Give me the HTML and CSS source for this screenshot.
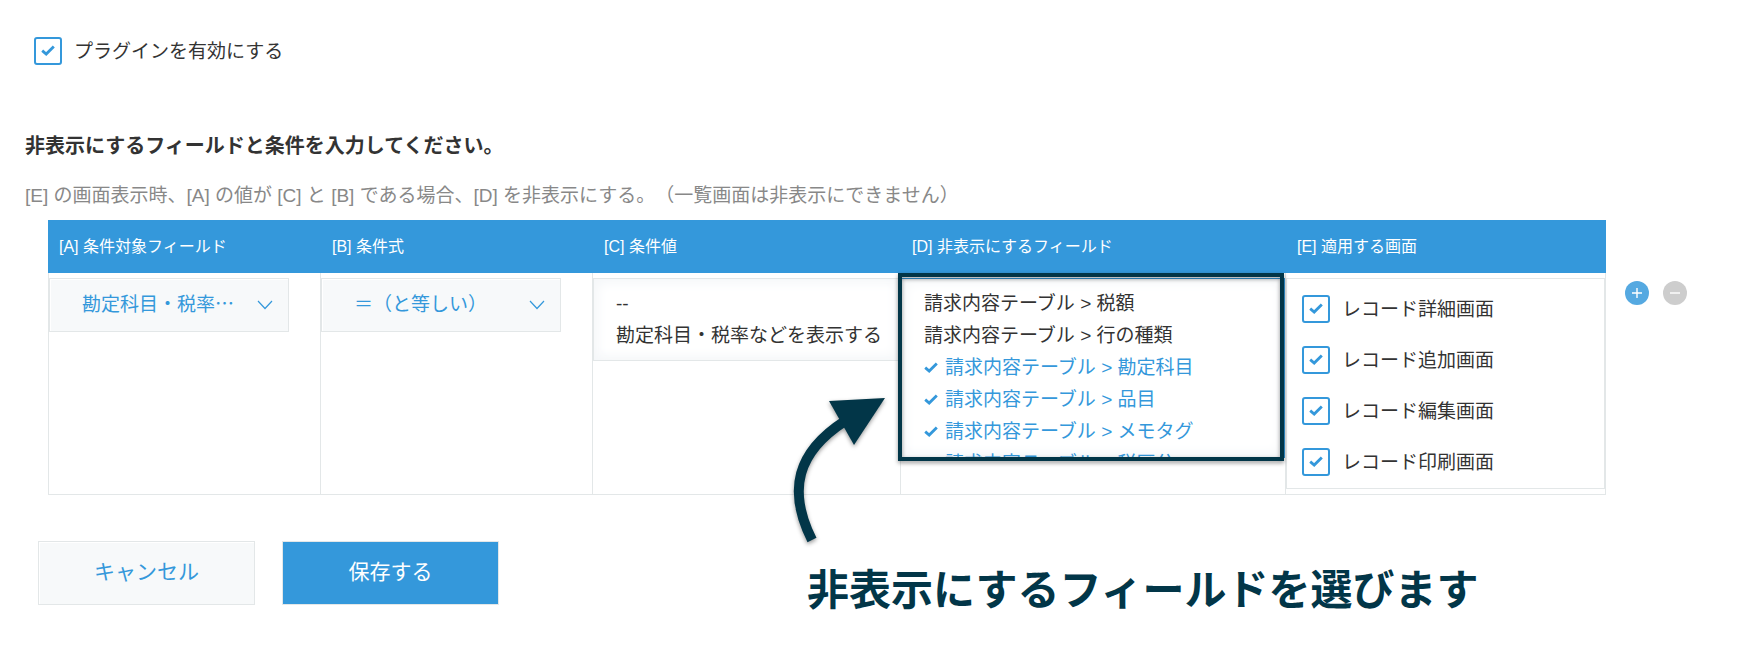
FILE: index.html
```html
<!DOCTYPE html>
<html lang="ja">
<head>
	<meta charset="utf-8">
	<meta name="viewport" content="width=device-width, initial-scale=1">
	<title>プラグインの設定</title>
	<link rel="stylesheet" href="styles.css">
</head>
<body>
<svg class="symbols" width="0" height="0" aria-hidden="true">
	<symbol id="tick" viewBox="0 0 14 11">
		<path d="M1.2 5.6 L5.2 9 L12.8 1.4" fill="none" stroke="#3498db" stroke-width="2.8"/>
	</symbol>
</svg>
<form class="settings">
	<label class="check">
		<input type="checkbox" checked>
		<svg class="tick"><use href="#tick"/></svg>
		<span>プラグインを有効にする</span>
	</label>

	<h1>非表示にするフィールドと条件を入力してください。</h1>
	<p class="hint">[E] の画面表示時、[A] の値が [C] と [B] である場合、[D] を非表示にする。（一覧画面は非表示にできません）</p>

	<div class="table_row">
		<table>
			<colgroup>
				<col class="col_field">
				<col class="col_operator">
				<col class="col_value">
				<col class="col_hidden">
				<col>
			</colgroup>
			<thead>
				<tr>
					<th>[A] 条件対象フィールド</th>
					<th>[B] 条件式</th>
					<th>[C] 条件値</th>
					<th>[D] 非表示にするフィールド</th>
					<th>[E] 適用する画面</th>
				</tr>
			</thead>
			<tbody>
				<tr>
					<td>
						<div class="dropdown">
							<select aria-label="条件対象フィールド">
								<option>勘定科目・税率…</option>
							</select>
							<svg class="chevron" viewBox="0 0 16 10"><path d="M1 1 L8 8.5 L15 1" fill="none" stroke="#3498db" stroke-width="1.2"/></svg>
						</div>
					</td>
					<td>
						<div class="dropdown">
							<select aria-label="条件式">
								<option>＝（と等しい）</option>
							</select>
							<svg class="chevron" viewBox="0 0 16 10"><path d="M1 1 L8 8.5 L15 1" fill="none" stroke="#3498db" stroke-width="1.2"/></svg>
						</div>
					</td>
					<td>
						<ul class="list" role="listbox" aria-label="条件値">
							<li role="option">--</li>
							<li role="option">勘定科目・税率などを表示する</li>
						</ul>
					</td>
					<td class="hidden_fields">
						<ul class="list list_focus" role="listbox" aria-label="非表示にするフィールド" aria-multiselectable="true">
							<li role="option">請求内容テーブル &gt; 税額</li>
							<li role="option">請求内容テーブル &gt; 行の種類</li>
							<li role="option" aria-selected="true"><svg><use href="#tick"/></svg>請求内容テーブル &gt; 勘定科目</li>
							<li role="option" aria-selected="true"><svg><use href="#tick"/></svg>請求内容テーブル &gt; 品目</li>
							<li role="option" aria-selected="true"><svg><use href="#tick"/></svg>請求内容テーブル &gt; メモタグ</li>
							<li role="option" aria-selected="true"><svg><use href="#tick"/></svg>請求内容テーブル &gt; 税区分</li>
						</ul>
						<!-- guide drawn over the table -->
						<div class="guide_frame"></div>
						<svg class="guide_arrow" viewBox="0 0 110 160">
							<path d="M31 147 C6 97 16 59 64 28" fill="none" stroke="#023648" stroke-width="10"/>
							<path d="M48 8 L104 5 L73 52 Z" fill="#023648"/>
						</svg>
						<p class="guide_text">非表示にするフィールドを選びます</p>
					</td>
					<td>
						<div class="screens">
							<label class="check">
								<input type="checkbox" checked>
								<svg class="tick"><use href="#tick"/></svg>
								<span>レコード詳細画面</span>
							</label>
							<label class="check">
								<input type="checkbox" checked>
								<svg class="tick"><use href="#tick"/></svg>
								<span>レコード追加画面</span>
							</label>
							<label class="check">
								<input type="checkbox" checked>
								<svg class="tick"><use href="#tick"/></svg>
								<span>レコード編集画面</span>
							</label>
							<label class="check">
								<input type="checkbox" checked>
								<svg class="tick"><use href="#tick"/></svg>
								<span>レコード印刷画面</span>
							</label>
						</div>
					</td>
				</tr>
			</tbody>
		</table>
		<div class="row_tools">
			<button type="button" class="round add" aria-label="行を追加">
				<svg viewBox="0 0 24 24"><path d="M7 12 H17 M12 7 V17" stroke="#fff" stroke-width="1.4"/></svg>
			</button>
			<button type="button" class="round remove" aria-label="行を削除">
				<svg viewBox="0 0 24 24"><path d="M7 12 H17" stroke="#fff" stroke-width="1.4"/></svg>
			</button>
		</div>
	</div>

	<div class="buttons">
		<button type="button" class="button cancel">キャンセル</button>
		<button type="submit" class="button save">保存する</button>
	</div>
</form>
</body>
</html>
```
FILE: styles.css
```css
*{
	box-sizing: border-box;
}
body{
	margin: 0;
	background-color: #fff;
	color: #333;
	font-family: "Liberation Sans", "Noto Sans CJK JP", sans-serif;
	font-size: 19px;
	line-height: 32px;
	text-spacing-trim: space-all;
}
.symbols{
	position: absolute;
}
.settings{
	padding: 37px 0 40px;
}
.settings > .check{
	margin-left: 34px;
}

/* checkboxes */
.check{
	display: flex;
	align-items: center;
	width: max-content;
	height: 28px;
	position: relative;
}
.check input{
	appearance: none;
	width: 28px;
	height: 28px;
	margin: 0 12px 0 0;
	border: 2px solid #3498db;
	border-radius: 3px;
	background-color: #fff;
}
.check span{
	padding-top: 2px;
}
.check .tick{
	position: absolute;
	left: 7px;
	top: 8px;
	width: 14px;
	height: 11px;
	display: none;
}
.check input:checked + .tick{
	display: block;
}

h1{
	margin: 65px 0 0 25px;
	font-size: 20px;
	line-height: 32px;
}
.hint{
	margin: 18px 0 8px 25px;
	color: #888;
}

/* condition table */
.table_row{
	display: flex;
	align-items: flex-start;
	padding: 0 67px 0 48px;
}
table{
	flex: 1;
	width: 100%;
	table-layout: fixed;
	border-collapse: separate;
	border-spacing: 0;
}
.col_field{
	width: 273px;
}
.col_operator{
	width: 272px;
}
.col_value{
	width: 308px;
}
.col_hidden{
	width: 385px;
}
th{
	height: 53px;
	padding: 0 11px;
	background-color: #3498db;
	color: #fff;
	font-size: 16px;
	font-weight: normal;
	line-height: 24px;
	text-align: left;
}
td{
	padding: 5px 0;
	border: 1px solid #e3e7e8;
	border-width: 0 1px 1px 0;
	vertical-align: top;
}
td:first-child{
	border-left-width: 1px;
}

.dropdown{
	position: relative;
	width: 240px;
}
.dropdown select{
	appearance: none;
	display: block;
	width: 100%;
	height: 54px;
	padding: 0 40px 6px 32px;
	border: 1px solid #e3e7e8;
	border-radius: 0;
	background-color: #f7f9fa;
	box-shadow: 1px 1px 1px #fff inset;
	color: #3498db;
	font-family: "Noto Sans CJK JP", sans-serif;
	font-size: 19px;
}
.chevron{
	position: absolute;
	right: 16px;
	top: 22px;
	width: 16px;
	height: 10px;
}

.list{
	margin: 0;
	padding: 9px 22px 8px;
	border: 1px solid #e3e7e8;
	background-color: #fff;
	box-shadow: 4px 4px 12px #f5f7f9 inset, -4px -4px 12px #f5f7f9 inset;
	list-style: none;
	white-space: nowrap;
}
.list_focus{
	height: 180px;
	padding-bottom: 0;
	border-color: #3498db;
	overflow: hidden;
}
.list li[aria-selected="true"]{
	color: #3498db;
}
.list svg{
	width: 14px;
	height: 13px;
	margin-right: 7px;
}

.screens{
	display: flex;
	flex-direction: column;
	gap: 23px;
	padding: 16px 15px 12px;
	border: 1px solid #e3e7e8;
}

.row_tools{
	display: flex;
	gap: 14px;
	padding: 61px 0 0 19px;
}
.round{
	width: 24px;
	height: 24px;
	padding: 0;
	border: 0;
	border-radius: 50%;
}
.round svg{
	display: block;
}
.add{
	background-color: #55a9e1;
}
.remove{
	background-color: #cdcdcd;
}

/* guide */
.hidden_fields{
	position: relative;
}
.guide_frame{
	position: absolute;
	left: -3px;
	top: 0;
	width: 386px;
	height: 188px;
	border: 4px solid #023648;
	filter: drop-shadow(0 2px 2px rgba(0,0,0,0.4));
}
.guide_arrow{
	position: absolute;
	left: -120px;
	top: 120px;
	width: 110px;
	height: 160px;
	filter: drop-shadow(0 2px 2px rgba(0,0,0,0.4));
}
.guide_text{
	position: absolute;
	left: -94px;
	top: 286px;
	margin: 0;
	color: #023648;
	font-size: 42px;
	font-weight: bold;
	line-height: 64px;
	white-space: nowrap;
}

/* buttons */
.buttons{
	display: flex;
	gap: 27px;
	margin: 46px 0 0 38px;
}
.button{
	width: 217px;
	height: 64px;
	padding: 0 0 6px;
	border: 1px solid #e3e7e8;
	font-family: inherit;
	font-size: 21px;
}
.cancel{
	background-color: #f7f9fa;
	box-shadow: 1px 1px 1px #fff inset;
	color: #3498db;
}
.save{
	background-color: #3498db;
	color: #fff;
}
```
